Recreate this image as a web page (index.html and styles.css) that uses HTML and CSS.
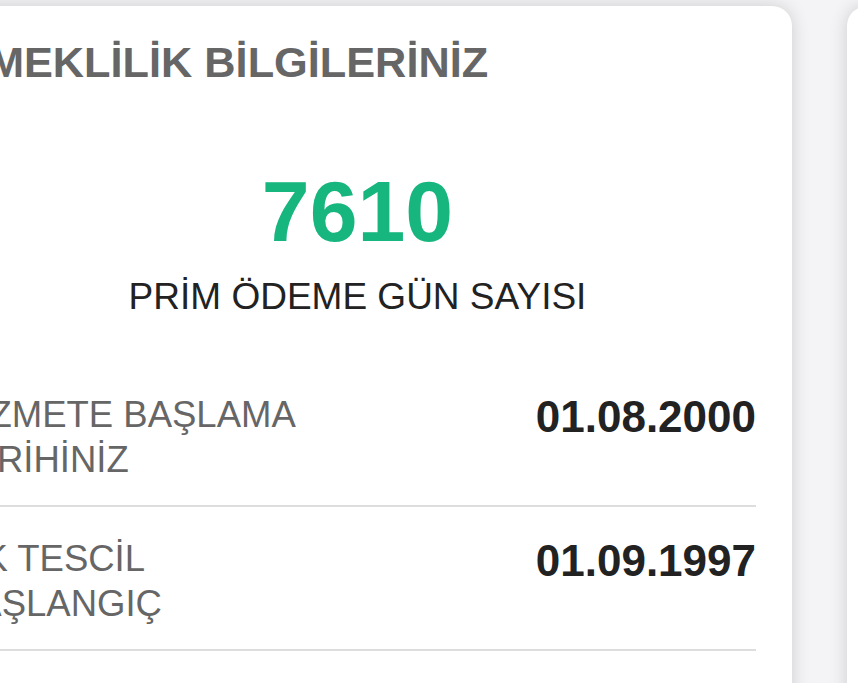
FILE: index.html
```html
<!DOCTYPE html>
<html lang="tr">
<head>
    <meta charset="UTF-8">
    <meta name="viewport" content="width=device-width, initial-scale=1.0">
    <title>Emeklilik Bilgileriniz</title>
    <link rel="stylesheet" href="styles.css">
</head>
<body>
    <div class="cards">
        <div class="card">
            <h2 class="card-title">EMEKLİLİK BİLGİLERİNİZ</h2>

            <div class="total">
                <div class="total-number">7610</div>
                <div class="total-label">PRİM ÖDEME GÜN SAYISI</div>
            </div>

            <div class="info-list">
                <div class="info-row">
                    <div class="info-label">HİZMETE BAŞLAMA TARİHİNİZ</div>
                    <div class="info-value">01.08.2000</div>
                </div>
                <div class="info-row">
                    <div class="info-label">İLK TESCİL BAŞLANGIÇ</div>
                    <div class="info-value">01.09.1997</div>
                </div>
            </div>
        </div>

        <div class="card"></div>
    </div>
</body>
</html>
```

FILE: styles.css
```css
body {
    font-family: "Liberation Sans", Arial, sans-serif;
    background: #f4f4f6;
    margin: 0;
    overflow: hidden;
}

.cards {
    display: flex;
    gap: 55px;
    margin-left: -77px;
    padding-top: 6px;
}

.card {
    flex: none;
    width: 869px;
    min-height: 720px;
    box-sizing: border-box;
    padding: 32px 36px 0;
    background: #fff;
    border-radius: 20px;
    box-shadow: 0 0 18px rgba(0, 0, 0, 0.16);
}

.card-title {
    margin: 0;
    font-size: 43.3px;
    font-weight: bold;
    color: #666;
}

.total {
    margin-top: 75px;
    text-align: center;
}

.total-number {
    font-size: 86px;
    font-weight: bold;
    color: #17b67e;
    margin-bottom: 15px;
}

.total-label {
    font-size: 37px;
    color: #222;
}

.info-list {
    margin-top: 45px;
}

.info-row {
    display: flex;
    justify-content: space-between;
    align-items: flex-start;
    padding: 29px 0 23px;
    border-bottom: 2px solid #ddd;
}

.info-label {
    max-width: 50%;
    margin-left: -6px;
    font-size: 36.5px;
    line-height: 45px;
    color: #666;
}

.info-value {
    font-size: 44px;
    font-weight: bold;
    color: #222;
}
```
